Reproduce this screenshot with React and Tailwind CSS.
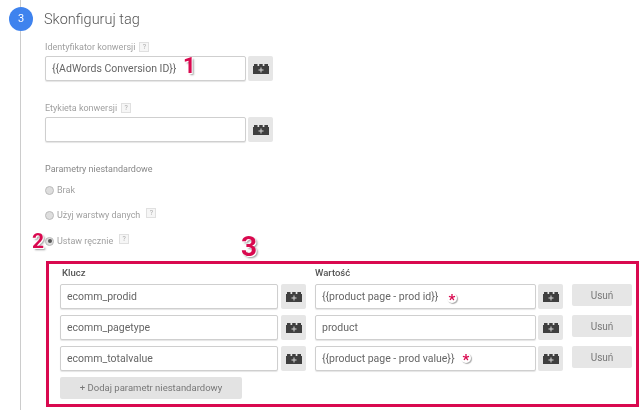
const Block = () => (
  <svg width="16" height="11" viewBox="0 0 16 11" aria-hidden="true">
    <path fill="#3f3f3f" d="M0 11V3h1V1h3.5v2h1.7V1h3.5v2h1.7V1H15v2h1v8z" />
    <path fill="#d8d8d8" d="M7.5 4.5h1v2h2v1h-2v2h-1v-2h-2v-1h2z" />
  </svg>
);

const BlockBtn = ({ className = "" }) => (
  <div className={`w-[25px] h-[25px] shrink-0 bg-[#e6e6e6] rounded-[2px] flex items-center justify-center ${className}`}>
    <Block />
  </div>
);

const Field = ({ value, width, children }) => (
  <div className={`relative h-[25px] ${width} border border-[#cfcfcf] rounded-[2px] bg-white shadow-[0_1px_1px_#e5e5e5] flex items-center pl-[6px] text-[10.5px] text-[#666] whitespace-nowrap`}>
    {value}
    {children}
  </div>
);

const Help = ({ className = "" }) => (
  <span className={`w-[10px] h-[10px] border border-[#e0e0e0] bg-[#f6f6f6] text-[7px] leading-[8px] text-[#aaa] text-center inline-block ${className}`}>?</span>
);

const Radio = ({ checked }) => (
  <span className="w-[9px] h-[9px] rounded-full border border-[#bbb] bg-[#dedede] flex items-center justify-center">
    {checked && <span className="w-[4px] h-[4px] rounded-full bg-[#555]" />}
  </span>
);

const Mark = ({ children, className = "" }) => (
  <span className={`absolute font-bold text-[#d9094f] [text-shadow:1px_1px_0_#fff,2px_2px_2px_#999] ${className}`}>{children}</span>
);

const Star = ({ className }) => (
  <span className={`absolute w-[10px] h-[10px] rounded-full bg-white shadow-[1px_1px_1px_#aaa] text-[#d9094f] text-[15px] font-bold leading-[15px] text-center ${className}`}>*</span>
);

const Row = ({ k, v, star, mb = "mb-[6px]" }) => (
  <div className={`flex items-start ${mb}`}>
    <Field value={k} width="w-[218px]" />
    <BlockBtn className="ml-[3px]" />
    <Field value={v} width="w-[221px] ml-[9px]">{star}</Field>
    <BlockBtn className="ml-[2px]" />
    <div className="w-[60px] h-[22px] ml-[9px] bg-[#e6e6e6] rounded-[2px] flex items-center justify-center text-[10px] text-[#777]">Usuń</div>
  </div>
);

export default function App() {
  return (
    <div className="relative w-[640px] h-[410px] overflow-hidden bg-white flex font-['Roboto',sans-serif] blur-[0.35px]">
      <div className="relative w-[45px] shrink-0">
        <div className="absolute left-[20px] top-0 bottom-0 w-px bg-[#cccccc]" />
        <div className="absolute left-[9px] top-[7px] w-[24px] h-[24px] rounded-full bg-[#3f83ee] text-white text-[11px] flex items-center justify-center">3</div>
      </div>
      <div className="flex-1 pt-[7px]">
        <h1 className="text-[14.5px] leading-[26px] font-light text-[#555] -ml-[1px]">Skonfiguruj tag</h1>
        <div className="mt-[7px] h-[14px] text-[9px] leading-[14px] text-[#a0a0a0] flex items-center gap-[4px]">Identyfikator konwersji <Help /></div>
        <div className="mt-[2px] flex items-start relative">
          <Field value="{{AdWords Conversion ID}}" width="w-[201px]" />
          <BlockBtn className="ml-[2px]" />
          <Mark className="left-[138px] top-[-3px] text-[22px] leading-[26px]">1</Mark>
        </div>
        <div className="mt-[20px] h-[14px] text-[9px] leading-[14px] text-[#a0a0a0] flex items-center gap-[4px]">Etykieta konwersji <Help /></div>
        <div className="mt-[2px] flex items-start">
          <Field value="" width="w-[201px]" />
          <BlockBtn className="ml-[2px]" />
        </div>
        <div className="mt-[20px] h-[14px] text-[9px] leading-[14px] text-[#888]">Parametry niestandardowe</div>
        <div className="mt-[7px] h-[14px] text-[9px] leading-[14px] text-[#a0a0a0] flex items-center gap-[3px]"><Radio />Brak</div>
        <div className="mt-[11px] h-[14px] text-[9px] leading-[14px] text-[#a0a0a0] flex items-center gap-[3px]"><Radio />Użyj warstwy danych <Help className="ml-[3px] -mt-[4px]" /></div>
        <div className="relative mt-[12px] h-[14px] text-[9px] leading-[14px] text-[#a0a0a0] flex items-center gap-[3px]">
          <Radio checked />Ustaw ręcznie <Help className="ml-[3px] -mt-[4px]" />
          <Mark className="left-[-13px] top-[-6px] text-[21px] leading-[26px]">2</Mark>
          <Mark className="left-[196px] top-[-3px] text-[28px] leading-[32px]">3</Mark>
        </div>
        <div className="mt-[13px] ml-[1px] w-[593px] h-[146px] border-[3px] border-[#d9094f] pl-[11px] pt-[2px]">
          <div className="flex h-[14px] text-[9.5px] leading-[14px] font-medium text-[#555] mb-[4px]">
            <span className="w-[255px] pl-[2px]">Klucz</span>
            <span>Wartość</span>
          </div>
          <Row k="ecomm_prodid" v="{{product page - prod id}}" star={<Star className="left-[131px] top-[8px]" />} />
          <Row k="ecomm_pagetype" v="product" />
          <Row k="ecomm_totalvalue" v="{{product page - prod value}}" star={<Star className="left-[145px] top-[6px]" />} />
          <div className="w-[182px] h-[22px] bg-[#e3e3e3] rounded-[2px] flex items-center justify-center text-[9.5px] text-[#777]">+ Dodaj parametr niestandardowy</div>
        </div>
      </div>
    </div>
  );
}
